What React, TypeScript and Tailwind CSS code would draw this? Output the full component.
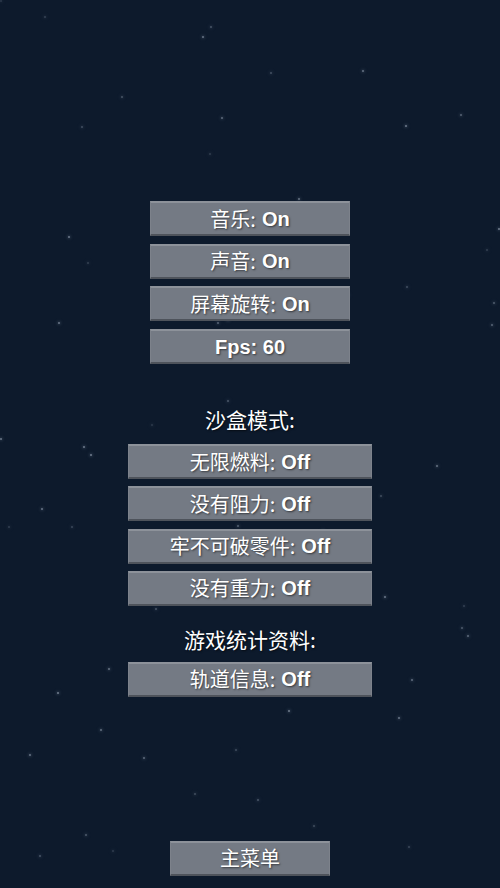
import React from "react";

// faint star field behind the menu
const stars = Array.from({ length: 70 }, (_, i) => {
  const a = Math.sin(i * 12.9898) * 43758.5453;
  const b = Math.sin(i * 78.233) * 12345.6789;
  const c = Math.sin(i * 3.17) * 9876.54;
  return {
    x: (a - Math.floor(a)) * 500,
    y: (b - Math.floor(b)) * 888,
    o: 0.2 + (c - Math.floor(c)) * 0.45,
  };
});

const CN = `"Noto Sans CJK SC", "Liberation Sans", sans-serif`;

function MenuButton({ label, value, width }: { label?: string; value?: string; width: string }) {
  return (
    <button
      className={`${width} h-[35px] flex items-center justify-center bg-[#747a84] border-t-2 border-t-[#8d929a] border-x border-x-[#7d828b] border-b-2 border-b-[#4e535b] text-white text-[20px] leading-none [text-shadow:1px_1px_2px_rgba(0,0,0,0.55)]`}
    >
      {label && <span className="font-normal" style={{ fontFamily: CN }}>{label}</span>}
      {value && (
        <span className={`font-bold font-['Liberation_Sans',sans-serif] ${label ? "ml-[6px]" : ""}`}>{value}</span>
      )}
    </button>
  );
}

function Heading({ children }: { children: React.ReactNode }) {
  return (
    <div className="h-6 flex items-center justify-center text-white text-[21px] [text-shadow:1px_1px_2px_rgba(0,0,0,0.6)]" style={{ fontFamily: CN }}>
      {children}
    </div>
  );
}

export default function App() {
  return (
    <div className="relative w-[500px] h-[888px] overflow-hidden bg-[#0d1a2c]">
      {stars.map((s, i) => (
        <div
          key={i}
          className="absolute w-[2px] h-[2px] rounded-full bg-[#a9b4c4] shadow-[0_0_3px_1px_rgba(150,165,190,0.35)]"
          style={{ left: s.x, top: s.y, opacity: s.o }}
        />
      ))}

      <div className="relative flex flex-col items-center pt-[201px]">
        <div className="flex flex-col gap-[7.7px]">
          <MenuButton width="w-[200px]" label="音乐:" value="On" />
          <MenuButton width="w-[200px]" label="声音:" value="On" />
          <MenuButton width="w-[200px]" label="屏幕旋转:" value="On" />
          <MenuButton width="w-[200px]" value="Fps: 60" />
        </div>

        <div className="mt-[44px] mb-[12px]">
          <Heading>沙盒模式:</Heading>
        </div>

        <div className="flex flex-col gap-[7.3px]">
          <MenuButton width="w-[244px]" label="无限燃料:" value="Off" />
          <MenuButton width="w-[244px]" label="没有阻力:" value="Off" />
          <MenuButton width="w-[244px]" label="牢不可破零件:" value="Off" />
          <MenuButton width="w-[244px]" label="没有重力:" value="Off" />
        </div>

        <div className="mt-[22px] mb-[10px]">
          <Heading>游戏统计资料:</Heading>
        </div>

        <MenuButton width="w-[244px]" label="轨道信息:" value="Off" />

        <div className="mt-[144px]">
          <MenuButton width="w-[160px]" label="主菜单" />
        </div>
      </div>
    </div>
  );
}
